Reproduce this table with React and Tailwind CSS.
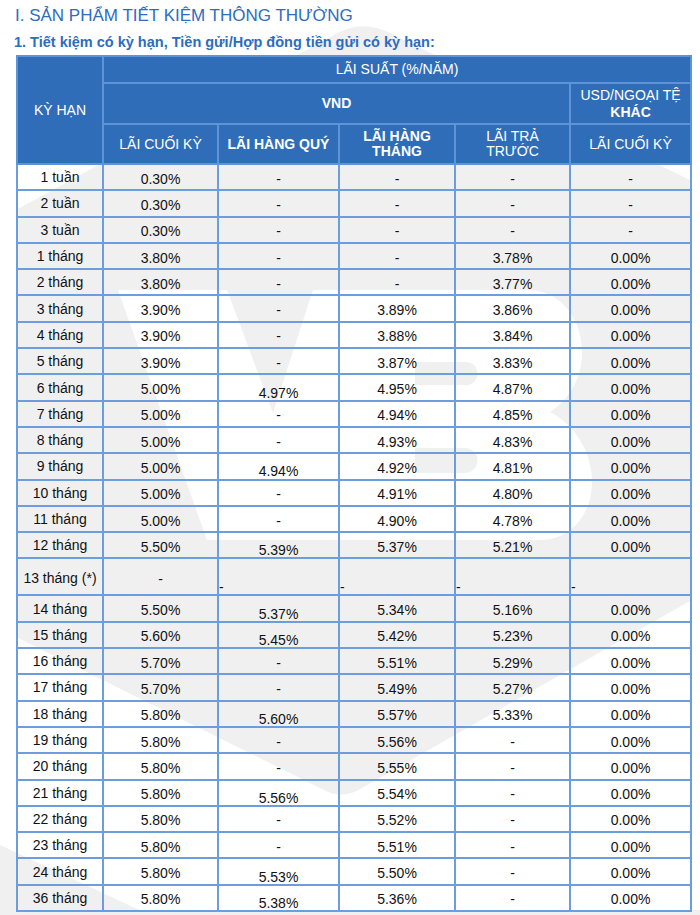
import React from 'react';

const rows = [
  ['1 tuần', '0.30%', '-', '-', '-', '-'],
  ['2 tuần', '0.30%', '-', '-', '-', '-'],
  ['3 tuần', '0.30%', '-', '-', '-', '-'],
  ['1 tháng', '3.80%', '-', '-', '3.78%', '0.00%'],
  ['2 tháng', '3.80%', '-', '-', '3.77%', '0.00%'],
  ['3 tháng', '3.90%', '-', '3.89%', '3.86%', '0.00%'],
  ['4 tháng', '3.90%', '-', '3.88%', '3.84%', '0.00%'],
  ['5 tháng', '3.90%', '-', '3.87%', '3.83%', '0.00%'],
  ['6 tháng', '5.00%', '4.97%', '4.95%', '4.87%', '0.00%'],
  ['7 tháng', '5.00%', '-', '4.94%', '4.85%', '0.00%'],
  ['8 tháng', '5.00%', '-', '4.93%', '4.83%', '0.00%'],
  ['9 tháng', '5.00%', '4.94%', '4.92%', '4.81%', '0.00%'],
  ['10 tháng', '5.00%', '-', '4.91%', '4.80%', '0.00%'],
  ['11 tháng', '5.00%', '-', '4.90%', '4.78%', '0.00%'],
  ['12 tháng', '5.50%', '5.39%', '5.37%', '5.21%', '0.00%'],
  ['13 tháng (*)'],
  ['14 tháng', '5.50%', '5.37%', '5.34%', '5.16%', '0.00%'],
  ['15 tháng', '5.60%', '5.45%', '5.42%', '5.23%', '0.00%'],
  ['16 tháng', '5.70%', '-', '5.51%', '5.29%', '0.00%'],
  ['17 tháng', '5.70%', '-', '5.49%', '5.27%', '0.00%'],
  ['18 tháng', '5.80%', '5.60%', '5.57%', '5.33%', '0.00%'],
  ['19 tháng', '5.80%', '-', '5.56%', '-', '0.00%'],
  ['20 tháng', '5.80%', '-', '5.55%', '-', '0.00%'],
  ['21 tháng', '5.80%', '5.56%', '5.54%', '-', '0.00%'],
  ['22 tháng', '5.80%', '-', '5.52%', '-', '0.00%'],
  ['23 tháng', '5.80%', '-', '5.51%', '-', '0.00%'],
  ['24 tháng', '5.80%', '5.53%', '5.50%', '-', '0.00%'],
  ['36 tháng', '5.80%', '5.38%', '5.36%', '-', '0.00%'],
];

// header cells: weight is set per cell so bold/normal never clash
const th = 'bg-[#2f6db9] text-white border-2 border-[#5e93d6] p-0 align-middle';
const td = 'border-2 border-[#6c9ddf] p-0 text-center align-middle leading-[14px]';

// faint "VB" watermark that sits behind the table
function Watermark() {
  return (
    <svg className="absolute inset-0 w-full h-full" viewBox="0 0 700 915" aria-hidden="true">
      <path
        d="M 16 210 L 102 163 L 332 36 Q 360 18 390 33 L 690 180 L 690 601 L 362 788 Q 343 800 324 790 L 16 637 Z"
        fill="#f0f0f0"
      />
      <path
        d="M 118 290 L 528 290 C 560 290 582 318 582 352 C 582 380 568 400 550 412 C 575 425 592 452 592 482 C 592 515 570 540 540 540 L 207 540 Z"
        fill="#ffffff"
      />
      <path d="M 227 290 L 313 290 L 273 413 Z" fill="#f0f0f0" />
      <path d="M 415 362 L 466 362 A 11.5 11.5 0 0 1 466 385 L 415 385 Z" fill="#f0f0f0" />
      <path d="M 415 448 L 465 448 A 12.5 12.5 0 0 1 465 473 L 415 473 Z" fill="#f0f0f0" />
      <path d="M 0 845 L 150 915 L 0 915 Z" fill="#f0f0f0" />
      <rect x="0" y="910" width="700" height="5" fill="#f0f0f0" />
    </svg>
  );
}

export default function App() {
  return (
    <div className="relative w-[700px] h-[915px] overflow-hidden bg-white font-['Liberation_Sans',Arial,sans-serif]">
      <Watermark />
      <div className="relative">
        <h1 className="pl-[15px] pt-[6px] text-[17px] leading-[20px] font-normal text-[#2d6cc0]">
          I. SẢN PHẨM TIẾT KIỆM THÔNG THƯỜNG
        </h1>
        <h2 className="mt-[7px] pl-[14px] text-[14.5px] leading-[18px] font-bold text-[#2d6cc0]">
          1. Tiết kiệm có kỳ hạn, Tiền gửi/Hợp đồng tiền gửi có kỳ hạn:
        </h2>

        <div className="mt-[4px] pl-[16px]">
          <table className="table-fixed border-collapse w-[674px] text-[14px] text-[#111]">
            <colgroup>
              <col className="w-[86px]" />
              <col className="w-[115px]" />
              <col className="w-[121px]" />
              <col className="w-[116px]" />
              <col className="w-[115px]" />
              <col className="w-[121px]" />
            </colgroup>
            <thead>
              <tr className="h-[27px]">
                <th rowSpan={3} className={`${th} font-normal`}>KỲ HẠN</th>
                <th colSpan={5} className={`${th} font-normal`}>LÃI SUẤT (%/NĂM)</th>
              </tr>
              <tr className="h-[41px]">
                <th colSpan={4} className={`${th} font-bold`}>VND</th>
                <th className={`${th} font-normal leading-[17px]`}>
                  USD/NGOẠI TỆ
                  <br />
                  <span className="font-bold">KHÁC</span>
                </th>
              </tr>
              <tr className="h-[40px]">
                <th className={`${th} font-normal`}>LÃI CUỐI KỲ</th>
                <th className={`${th} font-bold`}>LÃI HÀNG QUÝ</th>
                <th className={`${th} font-bold leading-[15px]`}>
                  LÃI HÀNG
                  <br />
                  THÁNG
                </th>
                <th className={`${th} font-normal leading-[15px]`}>
                  LÃI TRẢ
                  <br />
                  TRƯỚC
                </th>
                <th className={`${th} font-normal`}>LÃI CUỐI KỲ</th>
              </tr>
            </thead>
            <tbody>
              {rows.map((r) => {
                if (r.length === 1) {
                  return (
                    <tr key={r[0]} className="h-[37px]">
                      <td className={`${td} pt-[2px]`}>{r[0]}</td>
                      <td className={`${td} pt-[4px]`}>-</td>
                      <td className={`${td} !text-left !align-bottom`}>-</td>
                      <td className={`${td} !text-left !align-bottom`}>-</td>
                      <td className={`${td} !text-left !align-bottom`}>-</td>
                      <td className={`${td} !text-left !align-bottom`}>-</td>
                    </tr>
                  );
                }
                return (
                  <tr key={r[0]} className="h-[26.3px]">
                    <td className={td}>{r[0]}</td>
                    <td className={`${td} pt-[3px]`}>{r[1]}</td>
                    <td className={`${td} ${r[2] === '-' ? 'pt-[3px]' : 'pt-[10px]'}`}>{r[2]}</td>
                    <td className={`${td} pt-[3px]`}>{r[3]}</td>
                    <td className={`${td} pt-[3px]`}>{r[4]}</td>
                    <td className={`${td} pt-[3px]`}>{r[5]}</td>
                  </tr>
                );
              })}
            </tbody>
          </table>
        </div>
      </div>
    </div>
  );
}
